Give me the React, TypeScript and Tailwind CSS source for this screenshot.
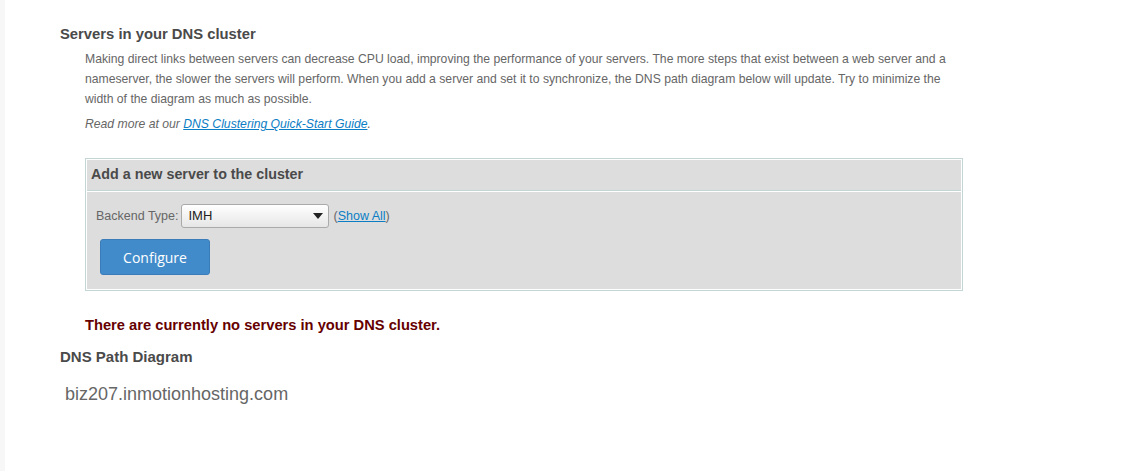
export default function App() {
  return (
    <div className="flex min-h-[471px] bg-white font-['Liberation_Sans',Arial,sans-serif]">
      <div className="w-[5px] shrink-0 bg-[#f7f7f7]" />
      <div className="flex-1 pl-[55px] pt-[25px]">
        <h2 className="text-[14.8px] font-bold leading-[18px] text-[#4a4a4a]">Servers in your DNS cluster</h2>
        <div className="ml-[25px] mt-[6px] w-[870px] text-[12.2px] leading-[20px] text-[#666]">
          <p>
            Making direct links between servers can decrease CPU load, improving the performance of your servers. The more
            steps that exist between a web server and a nameserver, the slower the servers will perform. When you add a
            server and set it to synchronize, the DNS path diagram below will update. Try to minimize the width of the
            diagram as much as possible.
          </p>
          <p className="mt-[5px] italic">
            Read more at our{' '}
            <a href="#" className="text-[#0b7dc4] underline">
              DNS Clustering Quick-Start Guide
            </a>
            .
          </p>
        </div>

        <div className="ml-[25px] mt-[24px] w-[878px] border border-[#c4d5d5]">
          <div className="border border-white bg-[#dddddd]">
            <div className="flex h-[31px] items-center border-b border-[#c4d5d5] px-[4px] text-[14.3px] font-bold text-[#4a4a4a]">
              Add a new server to the cluster
            </div>
            <div className="border-t border-white px-[9px] pb-[14px] pt-[12px]">
              <div className="flex items-center text-[12.5px] text-[#666]">
                <span>Backend Type:</span>
                <div className="ml-[3px] flex h-[24px] w-[148px] items-center justify-between rounded-[3px] border border-[#aaa] bg-gradient-to-b from-white to-[#e6e6e6] pl-[6px] pr-[5px] text-[13px] text-[#222]">
                  <span>IMH</span>
                  <svg width="10" height="6" viewBox="0 0 10 6">
                    <path d="M0 0h10L5 6z" fill="#222" />
                  </svg>
                </div>
                <span className="ml-[4px]">
                  (<a href="#" className="text-[#0b7dc4] underline">Show All</a>)
                </span>
              </div>
              <button className="ml-[4px] mt-[11px] h-[36px] w-[110px] rounded-[3px] border border-[#3a7cba] bg-[#428bca] font-['Open_Sans',sans-serif] text-[14px] text-white">
                Configure
              </button>
            </div>
          </div>
        </div>

        <p className="ml-[25px] mt-[23px] text-[14.7px] font-bold text-[#660000]">
          There are currently no servers in your DNS cluster.
        </p>
        <h3 className="mt-[10px] text-[15px] font-bold text-[#4a4a4a]">DNS Path Diagram</h3>
        <div className="ml-[5px] mt-[12px] text-[18px] text-[#666]">biz207.inmotionhosting.com</div>
      </div>
    </div>
  );
}
